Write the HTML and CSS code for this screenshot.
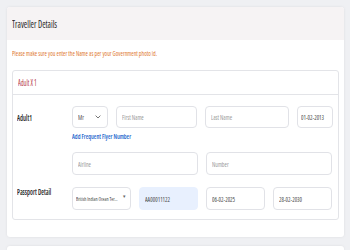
FILE: index.html
```html
<!DOCTYPE html>
<html>
<head>
<meta charset="utf-8">
<link rel="stylesheet" href="styles.css">
</head>
<body>
<div class="card">
  <div class="card-head"><span class="tx">Traveller Details</span></div>
  <div class="card-body">
    <div class="note"><span class="tx">Please make sure you enter the Name as per your Government photo id.</span></div>
    <div class="pax">
      <div class="pax-head"><span class="tx">Adult X 1</span></div>
      <div class="pax-body">
        <div class="row row1">
          <div class="label l1"><span class="tx">Adult1</span></div>
          <div class="field sel"><span class="tx">Mr</span><svg width="6" height="4" viewBox="0 0 6 4"><path d="M0.6 0.6 L3 3 L5.4 0.6" fill="none" stroke="#666" stroke-width="0.9"/></svg></div>
          <div class="field ph"><span class="tx">First Name</span></div>
          <div class="field ph"><span class="tx">Last Name</span></div>
          <div class="field val c"><span class="tx">01-02-2013</span></div>
        </div>
        <div class="row ff">
          <div></div>
          <a class="fflink"><span class="tx">Add Frequent Flyer Number</span></a>
        </div>
        <div class="row row2">
          <div></div>
          <div class="field ph"><span class="tx">Airline</span></div>
          <div class="field ph"><span class="tx">Number</span></div>
        </div>
        <div class="row row3">
          <div class="label l3"><span class="tx">Passport Detail</span></div>
          <div class="field sel small"><span class="tx">British Indian Ocean Ter...</span><span class="caret">▾</span></div>
          <div class="field val auto"><span class="tx">AA00011122</span></div>
          <div class="field val"><span class="tx">06-02-2025</span></div>
          <div class="field val"><span class="tx">28-02-2030</span></div>
        </div>
      </div>
    </div>
  </div>
</div>
<div class="card next"></div>
</body>
</html>
```
FILE: styles.css
```css
html, body {
  margin: 0;
  padding: 0;
}
body {
  background: #eff0f3;
  padding: 7px 6px 0 7px;
  font-family: "Open Sans", Roboto, sans-serif;
  font-stretch: 75%;
  color: #333;
  height: 250px;
  box-sizing: border-box;
  overflow: hidden;
}
.tx {
  display: inline-block;
  white-space: nowrap;
  transform: scaleX(0.78);
  transform-origin: 0 50%;
}
.card {
  background: #fff;
  border-radius: 3px;
  box-shadow: 0 0 3px rgba(0,0,0,0.08);
  height: 230px;
}
.card.next {
  margin-top: 9px;
  height: 4px;
  border-radius: 3px 3px 0 0;
}
.card-head {
  height: 33px;
  background: #f6f3f4;
  display: flex;
  align-items: center;
  padding-left: 5px;
  font-size: 10.5px;
  color: #262626;
  border-radius: 3px 3px 0 0;
}
.card-body {
  padding: 8px 5px 0 5px;
}
.note {
  font-size: 7.5px;
  color: #e0772f;
  line-height: 10px;
  height: 10px;
}
.pax {
  margin-top: 12px;
  border: 1px solid #e3e4e8;
  border-radius: 3px;
  height: 150px;
  box-sizing: border-box;
}
.pax-head {
  height: 23px;
  border-bottom: 1px solid #e3e4e8;
  display: flex;
  align-items: center;
  padding-left: 5px;
  font-size: 8px;
  color: #b3343f;
}
.pax-body {
  padding: 11px 6px 0 4px;
}
.row {
  display: grid;
  column-gap: 8px;
}
.row1 {
  grid-template-columns: 47px 36px 81px 84px 36px;
  height: 22px;
}
.ff {
  grid-template-columns: 47px 1fr;
  height: 12px;
  margin-top: 2px;
  align-items: center;
}
.row2 {
  grid-template-columns: 47px 126px 126px;
  margin-top: 10px;
  height: 23px;
}
.row3 {
  grid-template-columns: 47px 59px 59px 59px 59px;
  margin-top: 12px;
  height: 23px;
}
.label {
  font-size: 8px;
  color: #222;
  font-weight: 600;
  white-space: nowrap;
}
.l1 { align-self: center; }
.l3 { line-height: 10px; }
.field {
  border: 1px solid #e1e2e7;
  border-radius: 4px;
  background: #fff;
  display: flex;
  align-items: center;
  padding: 0 5px;
  font-size: 7.5px;
  box-sizing: border-box;
  white-space: nowrap;
  overflow: hidden;
}
.ph { color: #999; }
.val { color: #4a4a4a; }
.c { padding: 0 3px; }
.sel {
  justify-content: space-between;
  color: #555;
  padding: 0 6px 0 5px;
}
.sel.small {
  font-size: 6px;
  color: #444;
  padding: 0 3px;
  position: relative;
}
.caret {
  position: absolute;
  right: 4px;
  top: 5px;
  font-size: 5px;
  color: #666;
}
.auto {
  background: #e8f0fe;
  border-color: #e8f0fe;
}
.fflink {
  font-size: 7.5px;
  color: #2265cc;
  font-weight: 600;
}
```
